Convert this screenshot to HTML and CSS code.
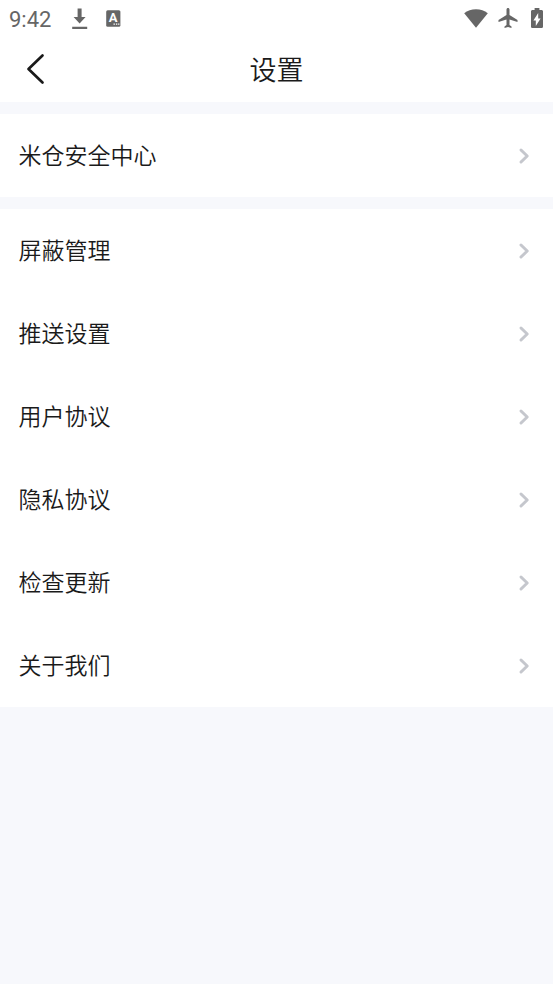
FILE: index.html
```html
<!DOCTYPE html>
<html lang="zh-CN">

<head>
    <meta charset="UTF-8">
    <meta name="viewport" content="width=device-width, initial-scale=1.0">
    <title>设置</title>
    <link rel="stylesheet" href="styles.css">
</head>

<body>
    <div class="status_bar">
        <span class="time">9:42</span>
        <svg class="download" width="16" height="22" viewBox="0 0 16 22">
            <path d="M5.6 0.500h4V9h4l-6 6.500L1.600 9h4z M0.200 18.700h15v2.200h-15z"/>
        </svg>
        <svg class="input_icon" width="15" height="17" viewBox="0 0 15 17">
            <rect x="0.200" y="0.300" width="14.200" height="16.400" rx="1.500"/>
            <text x="7.200" y="12.200" text-anchor="middle">A</text>
            <path class="dots" d="M7.500 13.500h1.400v1.200H7.500z M9.900 13.500h1.400v1.200H9.900z M12.100 13.500h1.300v1.200h-1.300z"/>
        </svg>
        <div class="status_right">
            <svg width="24" height="19" viewBox="0 0 24 19">
                <path d="M12 18.800L0.200 4.300C3.400 1.700 7.500 0.300 12 0.300s8.600 1.400 11.800 4z"/>
            </svg>
            <svg class="plane" width="20" height="20" viewBox="2 2 19 20">
                <path d="M21 16v-2l-8-5V3.500c0-.83-.67-1.500-1.500-1.500S10 2.670 10 3.500V9l-8 5v2l8-2.500V19l-2 1.500V22l3.500-1 3.500 1v-1.500L13 19v-5.500l8 2.500z"/>
            </svg>
            <svg class="battery" width="12" height="20" viewBox="7 2 10 20" preserveAspectRatio="none">
                <path d="M15.670 4H14V2h-4v2H8.330C7.600 4 7 4.600 7 5.330v15.330C7 21.400 7.600 22 8.330 22h7.330c.74 0 1.340-.6 1.340-1.330V5.330C17 4.600 16.400 4 15.670 4zM11 20v-5.500H9L13 7v5.500h2L11 20z"/>
            </svg>
        </div>
    </div>

    <header>
        <svg class="back" width="20" height="32" viewBox="0 0 20 32">
            <path d="M16.500 2.500L2.500 16l14 13.500"/>
        </svg>
        <h1>设置</h1>
    </header>

    <div class="group">
        <div class="item">
            <span>米仓安全中心</span>
            <svg class="arrow" viewBox="0 0 12 18"><path d="M3 3l6.200 6L3 15"/></svg>
        </div>
    </div>

    <div class="group">
        <div class="item">
            <span>屏蔽管理</span>
            <svg class="arrow" viewBox="0 0 12 18"><path d="M3 3l6.200 6L3 15"/></svg>
        </div>
        <div class="item">
            <span>推送设置</span>
            <svg class="arrow" viewBox="0 0 12 18"><path d="M3 3l6.200 6L3 15"/></svg>
        </div>
        <div class="item">
            <span>用户协议</span>
            <svg class="arrow" viewBox="0 0 12 18"><path d="M3 3l6.200 6L3 15"/></svg>
        </div>
        <div class="item">
            <span>隐私协议</span>
            <svg class="arrow" viewBox="0 0 12 18"><path d="M3 3l6.200 6L3 15"/></svg>
        </div>
        <div class="item">
            <span>检查更新</span>
            <svg class="arrow" viewBox="0 0 12 18"><path d="M3 3l6.200 6L3 15"/></svg>
        </div>
        <div class="item">
            <span>关于我们</span>
            <svg class="arrow" viewBox="0 0 12 18"><path d="M3 3l6.200 6L3 15"/></svg>
        </div>
    </div>
</body>

</html>
```

FILE: styles.css
```css
body {
    margin: 0;
    min-height: 984px;
    background: #f7f8fc;
    color: #1a1a1a;
    font-family: 'Noto Sans CJK SC', sans-serif;
    font-weight: 350;
}

.status_bar {
    display: flex;
    align-items: center;
    height: 37px;
    padding: 0 10px 0 9px;
    background: #fff;
    color: #666;
    fill: #666;
}

.time {
    width: 63px;
    padding-top: 2px;
    font-family: Roboto, sans-serif;
    font-size: 22px;
    font-weight: 400;
    line-height: 33px;
}

.input_icon {
    margin-left: 18px;
}

.input_icon text {
    font-family: Roboto, sans-serif;
    font-size: 13px;
    font-weight: 700;
    fill: #fff;
}

.dots {
    fill: #fff;
}

.status_right {
    display: flex;
    align-items: center;
    margin-left: auto;
    padding-bottom: 1px;
}

.plane {
    margin-left: 10px;
}

.battery {
    margin-left: 13px;
}

header {
    display: flex;
    align-items: center;
    height: 65px;
    padding: 0 26px;
    background: #fff;
}

.back {
    margin-bottom: 2px;
    fill: none;
    stroke: #1a1a1a;
    stroke-width: 2.7;
    stroke-linecap: round;
    stroke-linejoin: round;
}

h1 {
    flex: 1;
    margin: 0 20px 0 0; /* same width as the back icon, keeps the title centered */
    padding-bottom: 1px;
    font-size: 27px;
    font-weight: 350;
    line-height: 40px;
    text-align: center;
}

.group {
    margin-top: 12px;
    background: #fff;
}

.item {
    display: flex;
    align-items: center;
    justify-content: space-between;
    height: 83px;
    padding: 0 23px 0 18.5px;
    font-size: 23px;
    line-height: 34px;
}

.item span {
    padding-bottom: 4px;
}

.arrow {
    width: 12px;
    height: 18px;
    fill: none;
    stroke: #c5c7cd;
    stroke-width: 3;
    stroke-linecap: round;
    stroke-linejoin: round;
}
```
